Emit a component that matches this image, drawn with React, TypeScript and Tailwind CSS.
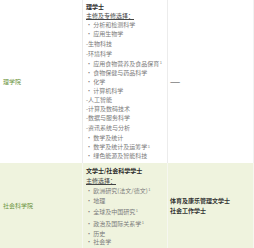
import React from "react";

type Line = { t: string; h: number; sup?: boolean; kind?: "head" | "sub" | "item" };

const row1: Line[] = [
  { t: "理学士", h: 9, kind: "head" },
  { t: "主修及专修选择：", h: 9, kind: "sub" },
  { t: "· 分析和检测科学", h: 9 },
  { t: "· 应用生物学", h: 9 },
  { t: "-生物科技", h: 10 },
  { t: "-环境科学", h: 10 },
  { t: "· 应用食物营养及食品保育", h: 10, sup: true },
  { t: "· 食物保健与药品科学", h: 9 },
  { t: "· 化学", h: 9 },
  { t: "· 计算机科学", h: 9 },
  { t: "-人工智能", h: 9 },
  { t: "-计算及数码技术", h: 9 },
  { t: "-数据与服务科学", h: 9 },
  { t: "-资讯系统与分析", h: 10 },
  { t: "· 数学及统计", h: 10 },
  { t: "· 数学及统计及运筹学", h: 9, sup: true },
  { t: "· 绿色能源及智能科技", h: 9 },
];

const row2: Line[] = [
  { t: "文学士/社会科学学士", h: 11, kind: "head" },
  { t: "主修选择：", h: 9, kind: "sub" },
  { t: "· 欧洲研究(法文/德文)", h: 10, sup: true },
  { t: "· 地理", h: 10 },
  { t: "· 全球及中国研究", h: 12, sup: true },
  { t: "· 政治及国际关系学", h: 12, sup: true },
  { t: "· 历史", h: 8 },
  { t: "· 社会学", h: 9 },
];

function Lines({ lines }: { lines: Line[] }) {
  return (
    <div className="flex flex-col">
      {lines.map((l, i) => (
        <div
          key={i}
          style={{ height: l.h }}
          className={
            "flex items-center whitespace-nowrap " +
            (l.kind === "head"
              ? "font-bold text-[#2a2a2a]"
              : l.kind === "sub"
              ? "text-[#444] underline"
              : "text-[#7a7a7a]")
          }
        >
          <span>
            {l.t}
            {l.sup ? <sup className="text-[4px] relative -top-[1.5px] ml-[0.5px]">1</sup> : null}
          </span>
        </div>
      ))}
    </div>
  );
}

export default function App() {
  return (
    <div
      className="w-[254px] h-[248px] overflow-hidden bg-white text-[6px] leading-[9px]"
      style={{ fontFamily: '"Noto Sans CJK SC", "Noto Sans", sans-serif' }}
    >
      <div className="grid grid-cols-[83px_85px_86px]">
        {/* Row 1 */}
        <div className="border-r border-[#ececec] flex items-center pl-[3px] h-[163px] text-[#6b9440]">
          理学院
        </div>
        <div className="border-r border-[#ececec] pl-[3px] pt-[2px] pb-[3px] h-[163px]">
          <Lines lines={row1} />
        </div>
        <div className="flex items-center pl-[2px] h-[163px] border-r border-[#f2f2f2]">
          <span className="font-bold text-[#444]">——</span>
        </div>

        {/* Row 2 */}
        <div className="bg-[#eff3de] border-r border-[#f6f7f0] flex items-center pl-[3px] h-[85px] text-[#6b9440]">
          社会科学院
        </div>
        <div className="bg-[#eff3de] border-r border-[#f6f7f0] pl-[3px] pt-[2px] h-[85px]">
          <Lines lines={row2} />
        </div>
        <div className="bg-[#eff3de] border-r border-[#f6f7f0] flex flex-col justify-center pl-[2px] h-[85px] font-bold text-[#333]">
          <div className="h-[10px] flex items-center">体育及康乐管理文学士</div>
          <div className="h-[10px] flex items-center">社会工作学士</div>
        </div>
      </div>
    </div>
  );
}
